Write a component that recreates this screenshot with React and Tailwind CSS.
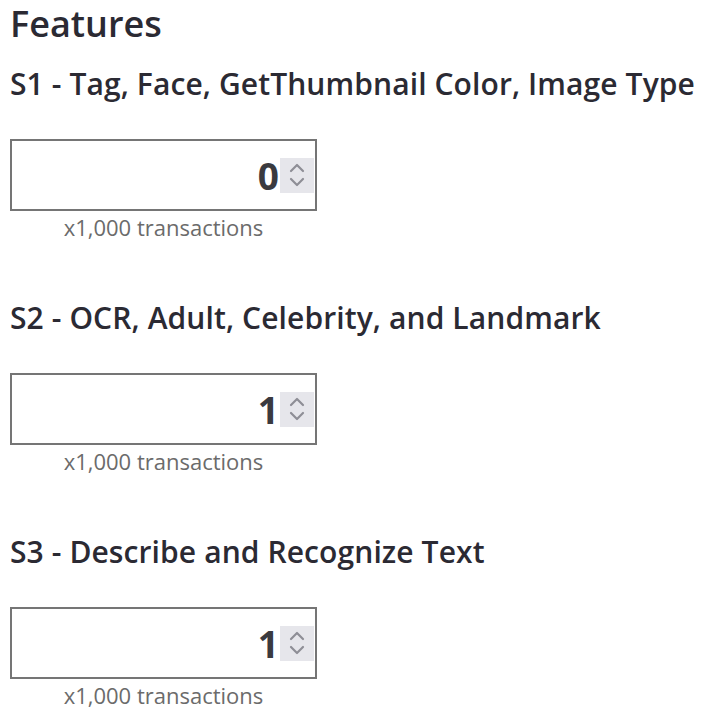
import React from "react";

const sections = [
  { id: "s1", title: "S1 - Tag, Face, GetThumbnail Color, Image Type", value: 0 },
  { id: "s2", title: "S2 - OCR, Adult, Celebrity, and Landmark", value: 1 },
  { id: "s3", title: "S3 - Describe and Recognize Text", value: 1 },
];

const Spinner = () => (
  <div className="w-[34px] h-[35px] bg-[#e6e6eb] flex items-center justify-center">
    <svg width="20" height="30" viewBox="0 0 20 30" fill="none" stroke="#8e8e96" strokeWidth="2.2" strokeLinecap="round" strokeLinejoin="round">
      <path d="M4 11 L10 5 L16 11" />
      <path d="M4 19 L10 25 L16 19" />
    </svg>
  </div>
);

const Section = ({ title, value }) => (
  <div className="flex flex-col">
    <h3 className="text-[30px] leading-[36px] font-semibold text-[#2b2a33] whitespace-nowrap tracking-[0.1px]">{title}</h3>
    <div className="w-[307px] mt-[37px] flex flex-col items-center">
      <div className="w-full h-[72px] border-2 border-[#757575] flex items-center justify-end pr-[1px]">
        <span className="text-[37px] font-bold text-[#3a3a3f] leading-none mr-[1px]">{value}</span>
        <Spinner />
      </div>
      <div className="text-[22px] leading-[32px] text-[#6b6b6b]">x1,000 transactions</div>
    </div>
  </div>
);

export default function App() {
  return (
    <div className="bg-white min-h-screen px-[10px] pt-[2px]" style={{ fontFamily: '"Open Sans", "Noto Sans", sans-serif' }}>
      <h2 className="text-[36px] leading-[44px] font-semibold text-[#2b2a33]">Features</h2>
      <div className="flex flex-col gap-[57px] mt-[20px]">
        {sections.map((s) => (
          <Section key={s.id} title={s.title} value={s.value} />
        ))}
      </div>
    </div>
  );
}
